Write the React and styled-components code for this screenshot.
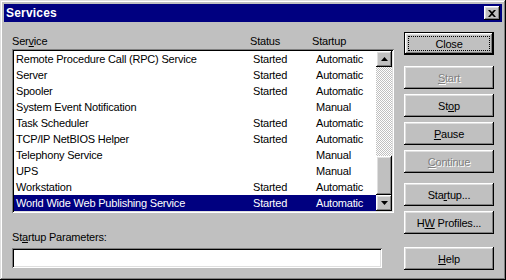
import styled, { createGlobalStyle } from 'styled-components'

const GlobalStyle = createGlobalStyle`
  html, body {
    margin: 0;
    padding: 0;
    background: #c0c0c0;
    overflow: hidden;
  }
  * {
    box-sizing: border-box;
  }
`

const raised = `
  box-shadow: inset -1px -1px #000, inset 1px 1px #fff, inset -2px -2px #808080, inset 2px 2px #dfdfdf;
`

const sunken = `
  box-shadow: inset 1px 1px #808080, inset -1px -1px #fff, inset 2px 2px #000, inset -2px -2px #dfdfdf;
`

const Window = styled.div`
  width: 506px;
  height: 280px;
  padding: 4px;
  background: #c0c0c0;
  font-family: "Liberation Sans", Arial, sans-serif;
  font-size: 11px;
  letter-spacing: -0.2px;
  color: #000;
  display: flex;
  flex-direction: column;
  box-shadow: inset -1px -1px #000, inset 1px 1px #dfdfdf, inset -2px -2px #808080, inset 2px 2px #fff;
`

const TitleBar = styled.div`
  height: 18px;
  background: #000080;
  display: flex;
  align-items: center;
  justify-content: space-between;
  padding: 0 2px 0 2px;
`

const Title = styled.span`
  color: #fff;
  font-weight: bold;
  font-size: 12px;
  letter-spacing: 0.2px;
`

const CloseBox = styled.div`
  width: 16px;
  height: 14px;
  background: #c0c0c0;
  display: flex;
  align-items: center;
  justify-content: center;
  ${raised}
`

const Body = styled.div`
  flex: 1;
  display: flex;
  gap: 10px;
  padding: 0 8px 0 8px;
`

const LeftCol = styled.div`
  width: 382px;
  display: flex;
  flex-direction: column;
`

const HeaderRow = styled.div`
  margin-top: 10px;
  height: 17px;
  display: grid;
  grid-template-columns: 238px 62px 1fr;
  align-items: center;
`

const ListBox = styled.div`
  height: 164px;
  padding: 2px;
  background: #fff;
  display: flex;
  ${sunken}
`

const Rows = styled.div`
  flex: 1;
  display: flex;
  flex-direction: column;
`

const Row = styled.div`
  height: 16px;
  padding-left: 2px;
  display: grid;
  grid-template-columns: 237px 63px 1fr;
  align-items: center;
  white-space: nowrap;
  background: ${p => (p.$selected ? '#000080' : 'transparent')};
  color: ${p => (p.$selected ? '#fff' : '#000')};
`

const ScrollBar = styled.div`
  width: 16px;
  display: flex;
  flex-direction: column;
`

const ScrollButton = styled.div`
  width: 16px;
  height: 16px;
  background: #c0c0c0;
  display: flex;
  align-items: center;
  justify-content: center;
  ${raised}
`

const Track = styled.div`
  height: ${p => p.$h}px;
  background-image: repeating-conic-gradient(#c0c0c0 0% 25%, #fff 0% 50%);
  background-size: 2px 2px;
`

const Thumb = styled.div`
  height: ${p => p.$h}px;
  background: #c0c0c0;
  ${raised}
`

const FieldLabel = styled.div`
  margin-top: 17px;
  height: 14px;
  line-height: 14px;
`

const Field = styled.div`
  margin-top: 4px;
  width: 370px;
  height: 20px;
  background: #fff;
  ${sunken}
`

const RightCol = styled.div`
  width: 90px;
  display: flex;
  flex-direction: column;
  padding-top: 10px;
`

const Button = styled.div`
  position: relative;
  width: 90px;
  height: 23px;
  margin-top: ${p => p.$gap || 0}px;
  background: #c0c0c0;
  display: flex;
  align-items: center;
  justify-content: center;
  color: ${p => (p.$disabled ? '#808080' : '#000')};
  text-shadow: ${p => (p.$disabled ? '1px 1px 0 #fff' : 'none')};
  border: ${p => (p.$default ? '1px solid #000' : 'none')};
  ${raised}

  &::after {
    content: '';
    display: ${p => (p.$default ? 'block' : 'none')};
    position: absolute;
    left: 3px;
    right: 3px;
    top: 3px;
    bottom: 3px;
    border: 1px dotted #000;
  }
`

const Key = styled.span`
  text-decoration: underline;
`

const services = [
  ['Remote Procedure Call (RPC) Service', 'Started', 'Automatic'],
  ['Server', 'Started', 'Automatic'],
  ['Spooler', 'Started', 'Automatic'],
  ['System Event Notification', '', 'Manual'],
  ['Task Scheduler', 'Started', 'Automatic'],
  ['TCP/IP NetBIOS Helper', 'Started', 'Automatic'],
  ['Telephony Service', '', 'Manual'],
  ['UPS', '', 'Manual'],
  ['Workstation', 'Started', 'Automatic'],
  ['World Wide Web Publishing Service', 'Started', 'Automatic'],
]

function Arrow({ up }) {
  return (
    <svg width="7" height="4" viewBox="0 0 7 4">
      <path d={up ? 'M3.5 0 L7 4 L0 4 Z' : 'M0 0 L7 0 L3.5 4 Z'} fill="#000" />
    </svg>
  )
}

export default function App() {
  return (
    <>
      <GlobalStyle />
      <Window>
        <TitleBar>
          <Title>Services</Title>
          <CloseBox>
            <svg width="8" height="7" viewBox="0 0 8 7">
              <path d="M0 0h2l2 2 2-2h2L5 3.5 8 7H6L4 5 2 7H0l3-3.5z" fill="#000" />
            </svg>
          </CloseBox>
        </TitleBar>
        <Body>
          <LeftCol>
            <HeaderRow>
              <span>Ser<Key>v</Key>ice</span>
              <span>Status</span>
              <span>Startup</span>
            </HeaderRow>
            <ListBox>
              <Rows>
                {services.map(([name, status, startup], i) => (
                  <Row key={name} $selected={i === services.length - 1}>
                    <span>{name}</span>
                    <span>{status}</span>
                    <span>{startup}</span>
                  </Row>
                ))}
              </Rows>
              <ScrollBar>
                <ScrollButton><Arrow up /></ScrollButton>
                <Track $h={89} />
                <Thumb $h={39} />
                <ScrollButton><Arrow /></ScrollButton>
              </ScrollBar>
            </ListBox>
            <FieldLabel>St<Key>a</Key>rtup Parameters:</FieldLabel>
            <Field />
          </LeftCol>
          <RightCol>
            <Button $default><span>Close</span></Button>
            <Button $gap={11} $disabled><span><Key>S</Key>tart</span></Button>
            <Button $gap={5}><span>St<Key>o</Key>p</span></Button>
            <Button $gap={5}><span><Key>P</Key>ause</span></Button>
            <Button $gap={5} $disabled><span><Key>C</Key>ontinue</span></Button>
            <Button $gap={10}><span>Sta<Key>r</Key>tup...</span></Button>
            <Button $gap={5}><span>H<Key>W</Key> Profiles...</span></Button>
            <Button $gap={13}><span><Key>H</Key>elp</span></Button>
          </RightCol>
        </Body>
      </Window>
    </>
  )
}
